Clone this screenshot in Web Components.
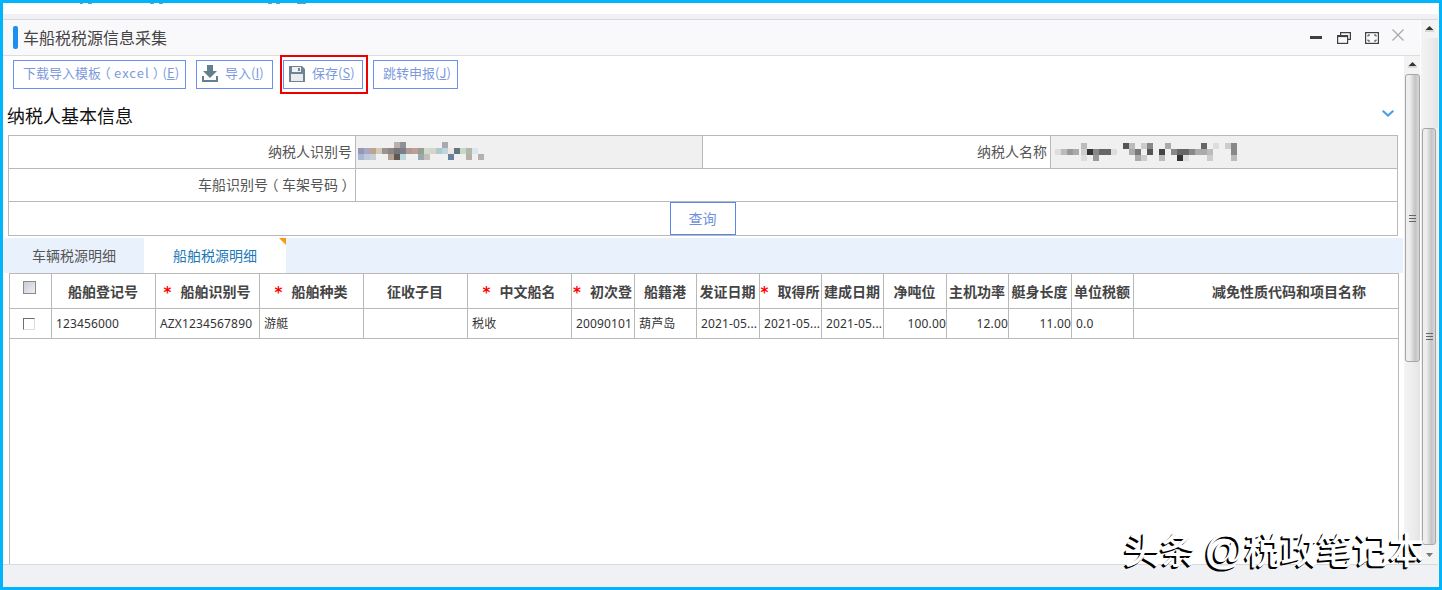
<!DOCTYPE html>
<html lang="zh-CN"><head><meta charset="utf-8"><title>车船税税源信息采集</title>
<style>
html,body{margin:0;padding:0;background:#fff;overflow:hidden}
body{font-family:"Noto Sans CJK SC","Noto Sans",sans-serif}
.pn{font-feature-settings:"halt";padding:0 3.25px}
</style></head><body>
<tax-frame>
  <win-header slot="header" title-text="车船税税源信息采集"></win-header>
  <div slot="toolbar" style="display:flex;gap:10px;padding:4px 0 0 10px;height:29px">
    <tool-btn w="173">下载导入模板<span class="pn">（</span><span style="letter-spacing:1px">excel</span><span class="pn">）</span>(<u>E</u>)</tool-btn>
    <tool-btn w="77" icon="down" gap="7">导入(<u>I</u>)</tool-btn>
    <tool-btn w="80" icon="save" gap="7" marked>保存(<u>S</u>)</tool-btn>
    <tool-btn w="85">跳转申报(<u>J</u>)</tool-btn>
  </div>
  <section-head slot="section">纳税人基本信息</section-head>
  <info-form slot="form"></info-form>
  <tab-bar slot="tabs"></tab-bar>
  <ship-grid slot="grid"></ship-grid>
</tax-frame>
<script>
class Base extends HTMLElement{
  render(html){this.attachShadow({mode:'open'}).innerHTML=html;}
}
customElements.define('tax-frame',class extends Base{connectedCallback(){if(this.shadowRoot)return;this.render(`
<style>
:host{display:block;width:1442px;height:590px;box-sizing:border-box;border:3px solid #00b5fb;background:#fff;position:relative;overflow:hidden}
.wrap{display:flex;flex-direction:column;height:100%;width:1435px}
.top{height:11px;flex:none;background:#fff;display:block}
.grey{height:5px;flex:none;background:#f0f1f5}
.row{flex:1;display:flex;min-height:0;border-top:1px solid #d6d8dd;border-bottom:1px solid #d6d8dd}
.main{width:1417px;flex:none;display:flex;flex-direction:column;margin-right:1px;min-height:0}
.body{flex:1;display:flex;min-height:0}
.content{width:1401px;flex:none;display:flex;flex-direction:column;min-height:0;background:#fff}
.foot{height:22px;flex:none;background:#f0f1f5}
::slotted([slot=grid]){flex:1}
water-mark{position:absolute;left:1121px;top:520px}
</style>
<div class="wrap">
  <svg class="top" width="1435" height="11" aria-hidden="true"><g fill="#8d95a3"><rect x="77" width="3" height="1"/><rect x="85" width="4" height="1"/><rect x="147" width="4" height="1"/><rect x="156" width="4" height="1"/><rect x="265" width="4" height="1"/><rect x="273" width="4" height="1"/><rect x="294" width="9" height="1"/></g></svg>
  <div class="grey"></div>
  <div class="row">
    <div class="main">
      <slot name="header"></slot>
      <div class="body">
        <div class="content">
          <slot name="toolbar"></slot><slot name="section"></slot><slot name="form"></slot><slot name="tabs"></slot><slot name="grid"></slot>
        </div>
        <v-scroll before="0" thumb="288" grip></v-scroll>
      </div>
    </div>
    <v-scroll before="90" thumb="417" outer></v-scroll>
  </div>
  <div class="foot"></div>
</div>
<water-mark></water-mark>`);}});

customElements.define('v-scroll',class extends Base{connectedCallback(){if(this.shadowRoot)return;
const outer=this.hasAttribute('outer');
this.render(`
<style>
:host{display:flex;flex-direction:column;flex:none;width:${outer?17:16}px;background:#eeeeee;min-height:0;overflow:hidden}
.btn{height:18px;flex:none;display:flex;align-items:center;justify-content:center;background:#f3f3f3}
.sp{flex:none;background:linear-gradient(90deg,#f4f4f4,#ececec 60%,#e4e4e4)}
.th{flex:none;box-sizing:border-box;width:${outer?14:15}px;margin-left:1px;border:1px solid #a6a6a6;border-radius:3px;background:linear-gradient(90deg,#f0f0f0 0,#ededed 30%,#c4c4c4 70%,#d8d8d8 100%);display:flex;align-items:center;justify-content:center}
.tr{flex:1;min-height:0;background:linear-gradient(90deg,#f4f4f4,#ececec 60%,#e4e4e4)}
svg{display:block}
</style>
<div class="btn"><svg width="9" height="6"><path d="M4.5 0 8.5 4H.5Z" fill="#333"/><path d="M0 5h9" stroke="#bbb"/></svg></div>
<div class="sp" style="height:${this.getAttribute('before')}px"></div>
<div class="th" style="height:${this.getAttribute('thumb')}px"><svg width="7" height="7"><path d="M0 .5h7M0 3.5h7M0 6.5h7" stroke="#666"/></svg></div>
<div class="tr"></div>
<div class="btn" style="height:19px"><svg width="7" height="4"><path d="M0 0H7L3.5 4Z" fill="#777"/></svg></div>`);}});

customElements.define('win-header',class extends Base{connectedCallback(){if(this.shadowRoot)return;this.render(`
<style>
:host{display:flex;flex:none;height:35px;box-sizing:content-box;border-bottom:1px solid #dddddd;background:#f9f9fb;align-items:center;padding-left:10px;font-family:"Noto Sans CJK SC",sans-serif}
.bar{width:5px;height:23px;border-radius:2px;background:#1c8fef;margin-right:5px;flex:none}
.t{font-size:16px;color:#444;flex:1;line-height:24px;padding-bottom:2px}
.ic{display:flex;align-items:center;margin-right:16px}
svg{display:block;flex:none}
</style>
<div class="bar"></div><div class="t">${this.getAttribute('title-text')}</div>
<div class="ic">
<svg width="12" height="3" style="margin-right:15px"><rect width="12" height="3" fill="#404040"/></svg>
<svg width="14" height="12" style="margin-right:14px" fill="none" stroke="#404040" stroke-width="1.2"><path d="M3.6 3V.6h9.8v6.8H11"/><rect x=".6" y="3.6" width="10" height="7.8"/><path d="M.6 4.3h10" stroke-width="1.6"/></svg>
<svg width="14" height="12" style="margin-right:13px" fill="none"><rect x=".6" y=".6" width="12.8" height="10.8" stroke="#404040" stroke-width="1.2"/><path d="M3 4.5V3h2M9 3h2v1.5M11 7.5V9H9M5 9H3V7.5" stroke="#404040"/></svg>
<svg width="12" height="12" style="margin-top:-5px" fill="none" stroke="#aaa" stroke-width="1.3"><path d="M.5.5l11 11M11.5.5l-11 11"/></svg>
</div>`);}});

customElements.define('tool-btn',class extends Base{connectedCallback(){if(this.shadowRoot)return;
const icons={down:`<svg width="16" height="17" viewBox="0 0 16 17"><path d="M5 0h6v6h4l-7 7-7-7h4Z" fill="#62808e"/><path d="M0 11h2v4h12v-4h2v6H0Z" fill="#62808e"/></svg>`,
save:`<svg width="16" height="16" viewBox="0 0 16 16"><path d="M0 0h13l3 3v13H0Z" fill="#6e8492"/><rect x="3" y="1" width="9" height="5" fill="#eef2f4"/><rect x="9" y="2" width="2" height="3" fill="#6e8492"/><rect x="2" y="8" width="12" height="7" fill="#e6ecef"/></svg>`};
const ic=this.getAttribute('icon');
this.render(`
<style>
:host{display:flex;position:relative;box-sizing:border-box;width:${this.getAttribute('w')}px;height:29px;border:1px solid #6c90ef;align-items:center;padding:0 0 3px ${ic?5:9}px;font:13px/24px "Noto Sans CJK SC",sans-serif;color:#7d9ade;white-space:nowrap;background:#fff;flex:none}
.i{display:block;margin-right:${this.getAttribute('gap')||0}px;height:17px}
:host([marked])::after{content:"";position:absolute;left:-4px;right:-6px;top:-6px;bottom:-6px;border:2px solid #ee0000}
</style>
${ic?`<span class="i">${icons[ic]}</span>`:''}<span><slot></slot></span>`);}});

customElements.define('section-head',class extends Base{connectedCallback(){if(this.shadowRoot)return;this.render(`
<style>
:host{display:flex;flex:none;height:46px;box-sizing:border-box;padding:14px 10px 0 4px;justify-content:space-between;font:18px/24px "Noto Sans CJK SC",sans-serif;color:#111}
svg{margin-top:7px;display:block}
</style>
<slot></slot><svg width="12" height="7" fill="none" stroke="#4a9fe8" stroke-width="2"><path d="M.7.7 6 5.6 11.3.7"/></svg>`);}});

customElements.define('blur-mosaic',class extends Base{connectedCallback(){if(this.shadowRoot)return;
const data=JSON.parse(this.getAttribute('data'));
let r='';data.forEach((row,y)=>row.forEach(([x,c])=>{r+=`<rect x="${x}" y="${y*6}" width="6" height="6" fill="${c}"/>`}));
this.render(`<style>:host{display:block;flex:none}svg{display:block}</style><svg width="${this.getAttribute('w')}" height="18" shape-rendering="crispEdges" aria-hidden="true">${r}</svg>`);}});

customElements.define('info-form',class extends Base{connectedCallback(){if(this.shadowRoot)return;
const a=[[[36,'#bbb0a8'],[42,'#8f8f95'],[84,'#aaa9b0']],
[[0,'#9498b8'],[6,'#a8a9c0'],[12,'#bca48e'],[18,'#d2cbbd'],[24,'#9a948e'],[30,'#8a8580'],[36,'#74757d'],[42,'#7a7e88'],[48,'#b09a98'],[54,'#bda095'],[60,'#97a08f'],[66,'#d0dcd2'],[72,'#d8d4cc'],[78,'#afc8cf'],[84,'#c0d5da'],[90,'#eee8e2'],[96,'#5f7580'],[102,'#c8d8c8'],[108,'#b0b8b0'],[114,'#d8e8ee']],
[[0,'#a8b8d0'],[6,'#c0c8dc'],[12,'#c8cfda'],[30,'#b0a090'],[36,'#605850'],[42,'#c0d8dc'],[60,'#98a8b0'],[66,'#c8c0b8'],[90,'#6a80a0'],[108,'#b8b0a8'],[120,'#b8b0aa']]];
const b=[[[28,'#bbb'],[70,'#555'],[76,'#bbb'],[88,'#ccc'],[94,'#888'],[112,'#aaa'],[148,'#666'],[160,'#ddd'],[172,'#ccc'],[178,'#888']],
[[2,'#ddd'],[8,'#bbb'],[14,'#999'],[20,'#aaa'],[28,'#ccc'],[34,'#333'],[40,'#888'],[46,'#666'],[52,'#666'],[58,'#ddd'],[76,'#aaa'],[82,'#777'],[94,'#555'],[106,'#444'],[118,'#888'],[124,'#666'],[130,'#666'],[136,'#888'],[142,'#aaa'],[148,'#aaa'],[154,'#bbb'],[178,'#888']],
[[28,'#ddd'],[40,'#999'],[82,'#aaa'],[88,'#ccc'],[106,'#bbb'],[124,'#333'],[130,'#ddd'],[154,'#ccc'],[178,'#bbb']]];
this.render(`
<style>
:host{display:grid;flex:none;margin:0 0 2px 5px;width:1390px;box-sizing:border-box;grid-template-columns:346px 346px 347px 346px;grid-template-rows:32px 32px 33px;gap:1px;padding:1px 0 1px 1px;background:#b9b9b9;font:14px/20px "Noto Sans CJK SC",sans-serif;color:#555}
div{background:#fff;display:flex;align-items:center;min-width:0}
.l{justify-content:flex-end;padding:0 3px 2px 0}
.v{background:#f0f0f0;padding-left:2px}
.w{grid-column:2/5}
.q{grid-column:1/5;justify-content:center}
.b{box-sizing:border-box;width:66px;height:33px;border:1px solid #5a88ea;justify-content:center;background:#fff;color:#6f8fdc;margin-left:-1px;padding-bottom:2px}
.pn{font-feature-settings:"halt";padding:0 3.5px}
</style>
<div class="l">纳税人识别号</div><div class="v"><blur-mosaic style="margin-top:-2px" w="126" data='${JSON.stringify(a)}'></blur-mosaic></div>
<div class="l">纳税人名称</div><div class="v"><blur-mosaic w="186" data='${JSON.stringify(b)}'></blur-mosaic></div>
<div class="l"><span>车船识别号<span class="pn">（</span>车架号码<span class="pn">）</span></span></div><div class="w"></div>
<div class="q"><div class="b">查询</div></div>`);}});

customElements.define('tab-bar',class extends Base{connectedCallback(){if(this.shadowRoot)return;this.render(`
<style>
:host{display:flex;flex:none;height:35px;margin-left:1px;width:1399px;background:#e9f1fd;font:14px/20px "Noto Sans CJK SC",sans-serif}
div{display:flex;align-items:center;justify-content:center;color:#555;width:140px;padding-bottom:2px;box-sizing:border-box}
.a{width:142px;background:#fff;color:#1e78b8;position:relative}
.a::after{content:"";position:absolute;right:0;top:0;border-top:7px solid #f59a12;border-left:7px solid transparent}
</style>
<div>车辆税源明细</div><div class="a">船舶税源明细</div>`);}});

customElements.define('ship-grid',class extends Base{connectedCallback(){if(this.shadowRoot)return;
const req=t=>`<i>*</i>${t}`;
const head=['',"船舶登记号",req('船舶识别号'),req('船舶种类'),'征收子目',req('中文船名'),req('初次登'),'船籍港','发证日期',req('取得所'),'建成日期','净吨位','主机功率','艇身长度','单位税额','减免性质代码和项目名称'];
const row=['','123456000','AZX1234567890','游艇','','税收','20090101','葫芦岛','2021-05...','2021-05...','2021-05...','100.00','12.00','11.00','0.0',''];
const right=new Set([11,12,13]);
this.render(`
<style>
:host{display:block;box-sizing:border-box;margin-left:6px;width:1390px;border:1px solid #b9b9b9;border-width:1px 0 0 1px;position:relative;min-height:0}
:host::after{content:"";position:absolute;right:0;top:0;bottom:0;border-right:1px solid #b9b9b9}
.g{display:grid;grid-template-columns:42px 104px 104px 104px 104px 104px 63px 62px 63px 62px 62px 63px 62px 63px 62px 265px;grid-template-rows:35px 30px;width:1389px}
.g>div{box-sizing:border-box;border-right:1px solid #b9b9b9;border-bottom:1px solid #b9b9b9;display:flex;align-items:center;overflow:hidden;white-space:nowrap;min-width:0}
.h{font:700 14px/20px "Noto Sans CJK SC",sans-serif;color:#444;justify-content:center;padding-right:1px}
.h.wide{padding:0 0 0 46px}
.d{font:12px/18px "Noto Sans","Noto Sans CJK SC",sans-serif;letter-spacing:.15px;color:#333;padding:0 0 0 4px}
.d.r{justify-content:flex-end;padding:0}
i{font:700 15px/14px "DejaVu Sans",sans-serif;color:#f00;margin-right:9px;flex:none;display:block;padding-top:3px}
.cb{display:block;box-sizing:border-box}
.c1{width:13px;height:13px;border:1px solid #8a8a8a;background:linear-gradient(135deg,#c8ccd4,#eceef2);margin-top:-7px}
.c2{width:12px;height:12px;border:1px solid;border-color:#707070 #dcdcdc #dcdcdc #707070;background:#fff}
.g>.cc{justify-content:flex-start;padding:0 0 0 13px}
</style>
<div class="g">
${head.map((h,i)=>i==0?`<div class="h cc"><span class="cb c1"></span></div>`:`<div class="h${i==15?' wide':''}">${h}</div>`).join('')}
${row.map((t,i)=>i==0?`<div class="d cc"><span class="cb c2"></span></div>`:`<div class="d${right.has(i)?' r':''}">${t}</div>`).join('')}
</div>`);}});

customElements.define('water-mark',class extends Base{connectedCallback(){if(this.shadowRoot)return;this.render(`
<style>:host{display:block;font:500 36px/50px "Noto Sans CJK SC",sans-serif;color:#fff;white-space:nowrap;text-shadow:-1px 1px 0 #000,-2px 2px 0 #000;pointer-events:none}
b{font:400 40px/50px "Liberation Sans",sans-serif}</style>头条 <b>@</b>税政笔记本`);}});
</script>
</body></html>
